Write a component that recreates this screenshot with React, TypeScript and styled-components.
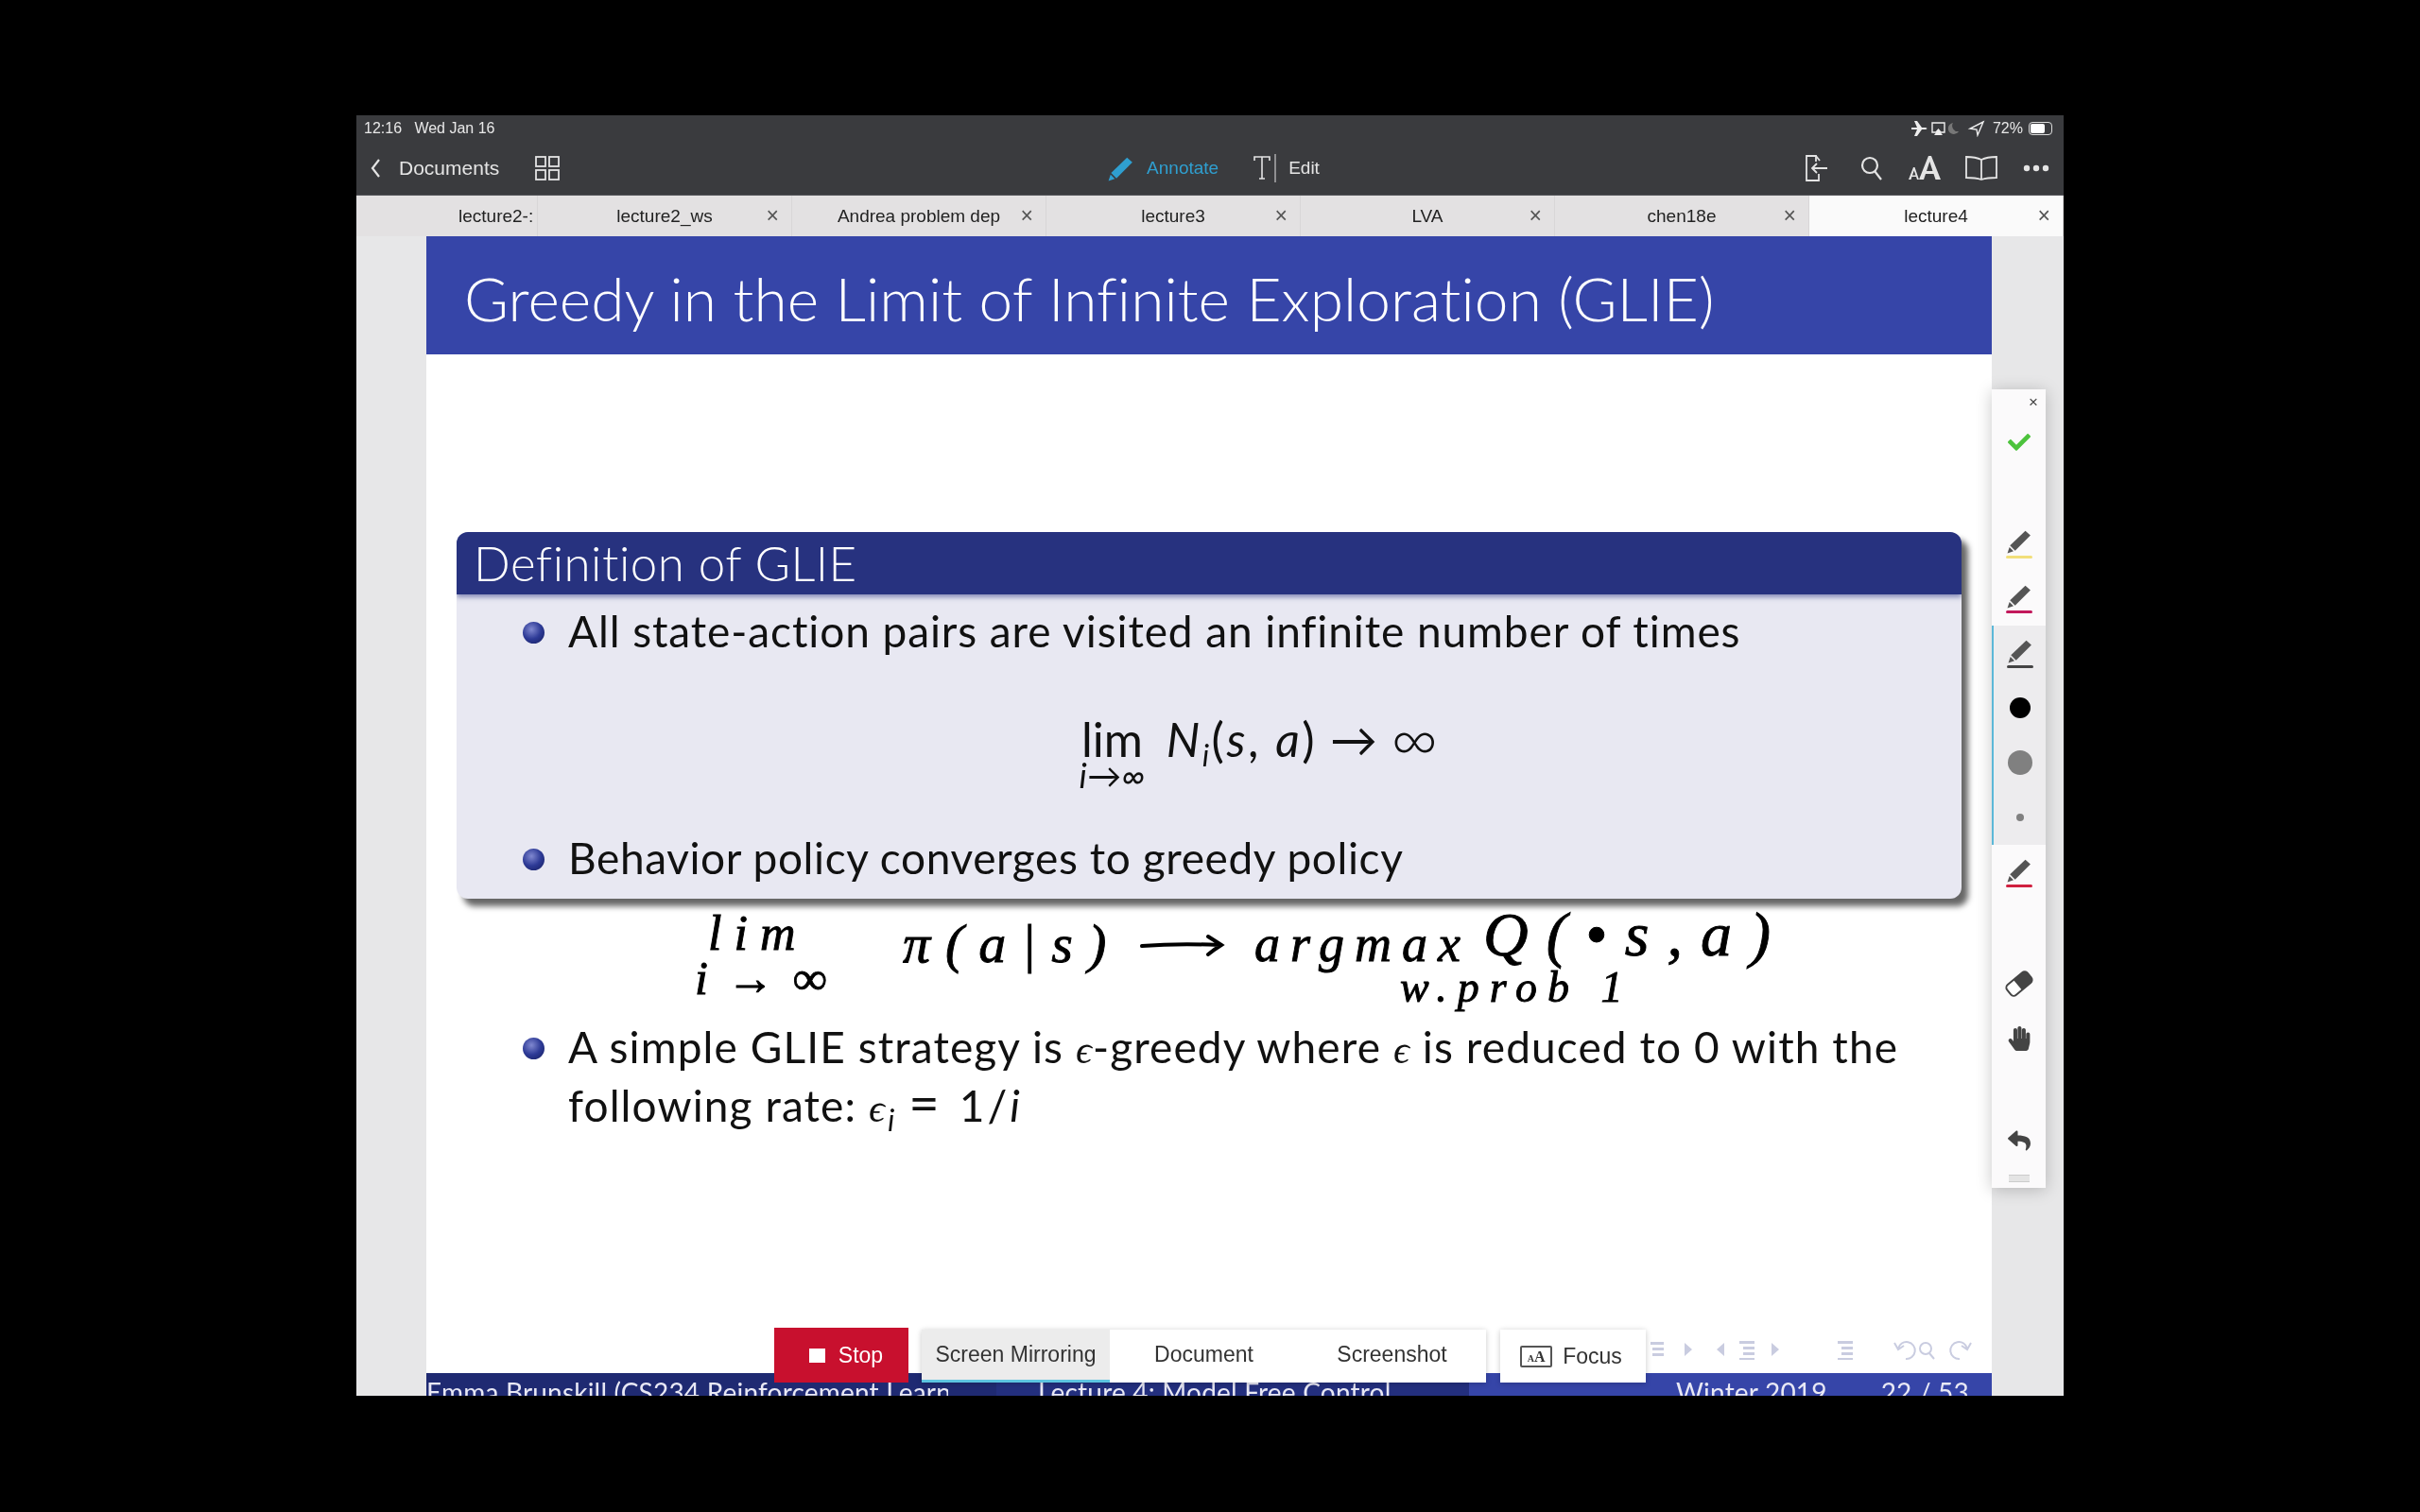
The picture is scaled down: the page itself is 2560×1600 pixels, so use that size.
import React from 'react';
import styled, { createGlobalStyle } from 'styled-components';
import { FaCheck, FaHandPaper, FaReply } from 'react-icons/fa';

const GlobalStyle = createGlobalStyle`
  html, body {
    margin: 0;
    padding: 0;
    background: #000;
  }
  #root {
    width: 2560px;
    height: 1600px;
    overflow: hidden;
  }
`;

const Page = styled.div`
  width: 2560px;
  height: 1600px;
  background: #000;
  padding: 122px 377px;
  box-sizing: border-box;
`;

const Screen = styled.div`
  position: relative;
  width: 1806px;
  height: 1355px;
  display: flex;
  flex-direction: column;
  overflow: hidden;
  background: #e7e7e8;
  filter: blur(0.5px);
  font-family: "Liberation Sans", Arial, sans-serif;
`;

const StatusBar = styled.div`
  height: 28px;
  padding: 0 10px 0 8px;
  background: #3a3b3e;
  color: #e8e8e8;
  font-size: 16px;
  display: flex;
  align-items: center;
  justify-content: space-between;
  flex-shrink: 0;
`;

const StatusRight = styled.div`
  display: flex;
  align-items: center;
  gap: 6px;
`;

const Battery = styled.div`
  width: 25px;
  height: 14px;
  border: 1px solid #ddd;
  border-radius: 4px;
  padding: 1px;
  box-sizing: border-box;
  display: flex;
  margin-right: 2px;
`;

const BatteryFill = styled.div`
  background: #fff;
  border-radius: 2px;
  height: 100%;
`;

const NavBar = styled.div`
  height: 57px;
  padding-left: 14px;
  background: #3a3b3e;
  border-bottom: 1px solid #55565a;
  box-sizing: border-box;
  display: grid;
  grid-template-columns: 1fr auto 1fr;
  align-items: center;
  color: #e4e4e4;
  flex-shrink: 0;
`;

const NavLeft = styled.div`
  display: flex;
  align-items: center;
`;

const BackLabel = styled.span`
  font-size: 21px;
  margin: 0 38px 0 19px;
`;

const NavCenter = styled.div`
  display: flex;
  align-items: center;
  margin-right: 6px;
  font-size: 19px;
`;

const AnnotateLabel = styled.span`
  color: #2f9fd0;
  margin: 0 36px 0 14px;
`;

const EditLabel = styled.span`
  margin-left: 12px;
`;

const NavRight = styled.div`
  display: grid;
  grid-auto-flow: column;
  grid-auto-columns: 58px;
  justify-content: end;
  justify-items: center;
  align-items: center;
`;

const TabBar = styled.div`
  height: 43px;
  background: #e3e1e2;
  display: flex;
  justify-content: flex-end;
  flex-shrink: 0;
  position: relative;
`;

const TabEdge = styled.div`
  position: absolute;
  left: 3px;
  top: 0;
  width: 16px;
  height: 100%;
  background: repeating-linear-gradient(90deg, #d4d2d3 0 1px, transparent 1px 5px);
`;

const Tab = styled.div<{ $active?: boolean; $cut?: boolean }>`
  width: 269px;
  flex-shrink: 0;
  position: relative;
  display: flex;
  align-items: center;
  justify-content: ${({ $cut }) => ($cut ? 'flex-start' : 'center')};
  padding-left: ${({ $cut }) => ($cut ? '185px' : '0')};
  box-sizing: border-box;
  background: ${({ $active }) => ($active ? '#fafafa' : '#e3e1e2')};
  border-right: 1px solid #d8d6d7;
  color: #222;
  font-size: 19px;
  white-space: nowrap;
  overflow: hidden;
`;

const TabClose = styled.span`
  position: absolute;
  right: 13px;
  top: 10px;
  color: #555;
  font-size: 23px;
  line-height: 23px;
  font-weight: 300;
`;

const Viewer = styled.div`
  flex: 1;
  min-height: 0;
  display: flex;
  justify-content: center;
`;

const Slide = styled.div`
  width: 1656px;
  margin-left: -2px;
  background: #fff;
  display: flex;
  flex-direction: column;
  font-family: Lato, "Open Sans", sans-serif;
  color: #111;
  position: relative;
`;

const TitleBar = styled.div`
  height: 125px;
  padding: 5px 0 0 40px;
  box-sizing: border-box;
  background: #3645a8;
  color: #fff;
  font-size: 64px;
  font-weight: 300;
  letter-spacing: 0.05px;
  display: flex;
  align-items: center;
  flex-shrink: 0;
`;

const SlideBody = styled.div`
  flex: 1;
  min-height: 0;
  padding: 188px 32px 0;
`;

const Block = styled.div`
  border-radius: 12px;
  background: #e8e8f2;
  box-shadow: 7px 8px 6px rgba(0, 0, 0, 0.6);
  overflow: hidden;
`;

const BlockHeader = styled.div`
  height: 66px;
  padding: 0 0 2px 18px;
  box-sizing: border-box;
  background: #27327f;
  color: #fff;
  font-size: 51px;
  font-weight: 300;
  letter-spacing: 0.5px;
  display: flex;
  align-items: center;
  box-shadow: 0 3px 5px rgba(39, 50, 127, 0.5);
`;

const BlockContent = styled.div`
  height: 322px;
  padding: 8px 0 0 70px;
  box-sizing: border-box;
`;

const BulletRow = styled.div<{ $spacing: number }>`
  display: flex;
  align-items: flex-start;
  font-size: 46px;
  line-height: 62px;
  letter-spacing: ${({ $spacing }) => $spacing}px;
`;

const Bullet = styled.span`
  width: 23px;
  height: 23px;
  margin: 21px 25px 0 0;
  border-radius: 50%;
  flex-shrink: 0;
  background: radial-gradient(circle at 40% 35%, #8088d0 0%, #2d3a96 50%, #141c5c 100%);
`;

const MathRow = styled.div`
  height: 178px;
  margin-left: 35px;
  display: flex;
  justify-content: center;
  align-items: flex-start;
  padding-top: 52px;
  box-sizing: border-box;
  font-size: 50px;
  line-height: 62px;
  gap: 14px;
`;

const LimStack = styled.div`
  display: flex;
  flex-direction: column;
  align-items: center;
  margin-right: 8px;
`;

const LimWord = styled.span`
  margin-top: 9px;
  line-height: 44px;
`;

const LimSub = styled.i`
  font-size: 36px;
  line-height: 32px;
  letter-spacing: 0.5px;
`;

const MathGroup = styled.span`
  letter-spacing: 2.5px;
`;

const MathItalic = styled.i`
  font-style: italic;
`;

const Sub = styled.i`
  font-size: 32px;
  position: relative;
  top: 10px;
  line-height: 0;
`;

const InfinityMark = styled.span`
  font-size: 68px;
  font-weight: 300;
  line-height: 58px;
`;

const Epsilon = styled.i`
  font-family: "Liberation Serif", serif;
  font-style: italic;
  font-size: 42px;
  line-height: 0;
`;

const RateFormula = styled.span`
  margin-left: 13px;
  letter-spacing: 3px;
`;

const EqualSign = styled.span`
  font-size: 56px;
  line-height: 0;
  margin: 0 18px 0 12px;
`;

const Following = styled.div`
  margin: 126px 0 0 70px;
`;

const Ink = styled.span<{ $x: number; $y: number; $size: number; $spacing?: number }>`
  position: absolute;
  left: ${({ $x }) => $x}px;
  top: ${({ $y }) => $y}px;
  font-family: "Liberation Serif", serif;
  font-style: italic;
  font-size: ${({ $size }) => $size}px;
  letter-spacing: ${({ $spacing }) => $spacing ?? 0}px;
  line-height: 1;
  color: #000;
  white-space: pre;
  -webkit-text-stroke: 0.9px #000;
`;

const InkArrow = styled.svg`
  position: absolute;
  left: 755px;
  top: 737px;
`;

const Footer = styled.div`
  height: 24px;
  display: grid;
  grid-template-columns: 603px 500px 1fr;
  font-size: 28px;
  letter-spacing: 0.2px;
  color: #e8e8f5;
  overflow: hidden;
  flex-shrink: 0;
`;

const FooterCell = styled.div<{ $bg: string }>`
  background: ${({ $bg }) => $bg};
  white-space: nowrap;
  line-height: 40px;
  overflow: hidden;
  display: flex;
  justify-content: space-between;
`;

const AuthorText = styled.span`
  display: block;
  width: 552px;
  overflow: hidden;
`;

const FooterTitle = styled.span`
  padding-left: 44px;
`;

const FooterDate = styled.span`
  padding-left: 219px;
`;

const PageNum = styled.span`
  padding-right: 24px;
`;

const BeamerNav = styled.svg`
  position: absolute;
  right: 16px;
  bottom: 36px;
`;

const Palette = styled.div`
  position: absolute;
  left: 1730px;
  top: 290px;
  width: 57px;
  height: 845px;
  background: #fbfafb;
  box-shadow: 0 2px 16px rgba(0, 0, 0, 0.22);
  display: flex;
  flex-direction: column;
  align-items: center;
`;

const PaletteClose = styled.span`
  align-self: flex-end;
  margin: 4px 8px 0 0;
  font-size: 17px;
  line-height: 20px;
  height: 20px;
  color: #444;
`;

const CheckSlot = styled.div`
  color: #4cc33c;
  font-size: 24px;
  height: 24px;
  margin-top: 20px;
  line-height: 24px;
`;

const Slot = styled.div<{ $h: number; $top?: number }>`
  height: ${({ $h }) => $h}px;
  margin-top: ${({ $top }) => $top ?? 0}px;
  flex-shrink: 0;
  display: flex;
  flex-direction: column;
  align-items: center;
  justify-content: center;
`;

const PenLine = styled.div<{ $color: string }>`
  width: 28px;
  height: 3px;
  border-radius: 2px;
  background: ${({ $color }) => $color};
  margin-top: 2px;
`;

const ActiveGroup = styled.div`
  align-self: stretch;
  height: 232px;
  flex-shrink: 0;
  background: #edecee;
  border-left: 2px solid #5cb8d8;
  display: flex;
  flex-direction: column;
  align-items: center;
`;

const Dot = styled.div<{ $size: number; $color: string }>`
  width: ${({ $size }) => $size}px;
  height: ${({ $size }) => $size}px;
  border-radius: 50%;
  background: ${({ $color }) => $color};
`;

const Grip = styled.div`
  width: 22px;
  height: 6px;
  margin-top: 14px;
  border-top: 1px solid #ccc;
  border-bottom: 1px solid #ccc;
  background: #e4e4e4;
`;

const Dock = styled.div`
  position: absolute;
  left: 442px;
  top: 1283px;
  display: flex;
  align-items: flex-end;
  font-size: 23px;
  color: #333;
`;

const StopButton = styled.div`
  width: 142px;
  height: 58px;
  background: #c8102e;
  color: #fff;
  display: flex;
  align-items: center;
  justify-content: center;
  gap: 14px;
  padding-left: 10px;
  box-sizing: border-box;
`;

const StopSquare = styled.span`
  width: 17px;
  height: 15px;
  background: #fff;
`;

const Segments = styled.div`
  margin-left: 14px;
  display: flex;
  background: #fff;
  box-shadow: 0 1px 6px rgba(0, 0, 0, 0.22);
`;

const Segment = styled.div<{ $selected?: boolean }>`
  width: 199px;
  height: 56px;
  box-sizing: border-box;
  display: flex;
  align-items: center;
  justify-content: center;
  background: ${({ $selected }) => ($selected ? '#ececec' : '#fff')};
  border-bottom: 3px solid ${({ $selected }) => ($selected ? '#5cc4e0' : '#fff')};
`;

const FocusButton = styled.div`
  margin-left: 15px;
  width: 154px;
  height: 56px;
  padding-right: 4px;
  box-sizing: border-box;
  background: #fff;
  box-shadow: 0 1px 6px rgba(0, 0, 0, 0.22);
  display: flex;
  align-items: center;
  justify-content: center;
  gap: 11px;
`;

const FocusIcon = styled.span`
  width: 34px;
  height: 23px;
  box-sizing: border-box;
  border: 2px solid #555;
  border-radius: 2px;
  font-family: "Liberation Serif", serif;
  font-size: 16px;
  font-weight: 700;
  line-height: 19px;
  text-align: center;
`;

const SmallA = styled.span`
  font-size: 10px;
`;

const Pen: React.FC<{ color?: string; size?: number }> = ({ color = '#555', size = 26 }) => (
  <svg width={size} height={size} viewBox="0 0 24 24" fill={color}>
    <path d="M18 1.5 L23 6 L8 21 L3 16 Z" />
    <path d="M2.5 17.5 L6.5 21.5 L0.5 23.5 Z" />
  </svg>
);

const EraserIcon = () => (
  <svg width="30" height="30" viewBox="0 0 30 30">
    <g transform="rotate(-40 15 15)">
      <rect x="1" y="8" width="28" height="14" rx="4" fill="#fff" stroke="#444" strokeWidth="2" />
      <path d="M13 8 H25 Q29 8 29 12 V18 Q29 22 25 22 H13 Z" fill="#444" />
    </g>
  </svg>
);

const DocIcon = () => (
  <svg width="26" height="30" viewBox="0 0 26 30" fill="none" stroke="#e4e4e4" strokeWidth="1.8">
    <path d="M12 8 V2 H2 V28 H15 V21" />
    <path d="M12 2 L16 7" />
    <path d="M24 15 H8 M13 10 L8 15 L13 20" />
  </svg>
);

const SearchIcon = () => (
  <svg width="26" height="28" viewBox="0 0 26 28" fill="none" stroke="#e4e4e4" strokeWidth="2.2">
    <circle cx="11" cy="11" r="8" />
    <path d="M16 17 L23 26" />
  </svg>
);

const BookIcon = () => (
  <svg width="36" height="28" viewBox="0 0 36 28" fill="none" stroke="#e4e4e4" strokeWidth="1.8">
    <path d="M18 5 Q12 2 2 2 V24 Q12 24 18 26 Q24 24 34 24 V2 Q24 2 18 5 Z M18 5 V26" />
  </svg>
);

const GridIcon = () => (
  <svg width="26" height="26" viewBox="0 0 26 26" fill="none" stroke="#e4e4e4" strokeWidth="1.8">
    <rect x="1" y="1" width="10" height="10" />
    <rect x="15" y="1" width="10" height="10" />
    <rect x="1" y="15" width="10" height="10" />
    <rect x="15" y="15" width="10" height="10" />
  </svg>
);

const ChevronIcon = () => (
  <svg width="12" height="22" viewBox="0 0 12 22" fill="none" stroke="#e4e4e4" strokeWidth="2.2">
    <path d="M10 2 L3 11 L10 20" />
  </svg>
);

const CursorTIcon = () => (
  <svg width="26" height="30" viewBox="0 0 26 30" fill="none" stroke="#e4e4e4" strokeWidth="1.6">
    <path d="M2 7 V3 H18 V7 M10 3 V26 M7 26 H13" />
    <path d="M24 0 V30" strokeWidth="1" />
  </svg>
);

const AaIcon = () => (
  <svg width="40" height="30" viewBox="0 0 40 30" fill="#e4e4e4">
    <path d="M1 27 L6 14 H7.5 L12 27 H10 L9 24 H4.5 L3.5 27 Z M5 22.5 H8.5 L6.8 17.5 Z" />
    <path d="M12 27 L22 2 H25 L35 27 H29.5 L27.5 21 H19 L17 27 Z M20 18 H26.5 L23.3 8 Z" />
  </svg>
);

const DotsIcon = () => (
  <svg width="28" height="8" viewBox="0 0 28 8" fill="#e4e4e4">
    <circle cx="4" cy="4" r="3.2" />
    <circle cx="14" cy="4" r="3.2" />
    <circle cx="24" cy="4" r="3.2" />
  </svg>
);

const StatusIcons = () => (
  <svg width="80" height="18" viewBox="0 0 80 18" fill="#eee">
    <path d="M0 8 H6 L3 1 H6 L11 8 H15 Q18 9 15 10 H11 L6 17 H3 L6 10 H0 Z" />
    <path d="M22 3 H35 V13 H31 L28.5 10 L26 13 H22 Z" fill="none" stroke="#eee" strokeWidth="1.4" />
    <path d="M28.5 10 L33 16 H24 Z" />
    <path d="M44 3 A6 6 0 1 0 50 12 A6 6 0 0 1 44 3 Z" fill="#777" />
    <path d="M76 2 L62 9 L69 10 L70 16 Z" fill="none" stroke="#eee" strokeWidth="1.4" />
  </svg>
);

const tabs = ['lecture2_ws', 'Andrea problem dep', 'lecture3', 'LVA', 'chen18e'];

const App: React.FC = () => (
  <>
    <GlobalStyle />
    <Page>
      <Screen>
        <StatusBar>
          <span>12:16&nbsp;&nbsp; Wed Jan 16</span>
          <StatusRight>
            <StatusIcons />
            <span>72%</span>
            <Battery>
              <BatteryFill style={{ width: '72%' }} />
            </Battery>
          </StatusRight>
        </StatusBar>
        <NavBar>
          <NavLeft>
            <ChevronIcon />
            <BackLabel>Documents</BackLabel>
            <GridIcon />
          </NavLeft>
          <NavCenter>
            <Pen color="#2f9fd0" size={27} />
            <AnnotateLabel>Annotate</AnnotateLabel>
            <CursorTIcon />
            <EditLabel>Edit</EditLabel>
          </NavCenter>
          <NavRight>
            <DocIcon />
            <SearchIcon />
            <AaIcon />
            <BookIcon />
            <DotsIcon />
          </NavRight>
        </NavBar>
        <TabBar>
          <TabEdge />
          <Tab $cut>lecture2-:</Tab>
          {tabs.map((t) => (
            <Tab key={t}>
              {t}
              <TabClose>×</TabClose>
            </Tab>
          ))}
          <Tab $active>
            lecture4
            <TabClose>×</TabClose>
          </Tab>
        </TabBar>
        <Viewer>
          <Slide>
            <TitleBar>Greedy in the Limit of Infinite Exploration (GLIE)</TitleBar>
            <SlideBody>
              <Block>
                <BlockHeader>Definition of GLIE</BlockHeader>
                <BlockContent>
                  <BulletRow $spacing={0.9}>
                    <Bullet />
                    All state-action pairs are visited an infinite number of times
                  </BulletRow>
                  <MathRow>
                    <LimStack>
                      <LimWord>lim</LimWord>
                      <LimSub>i→∞</LimSub>
                    </LimStack>
                    <MathGroup>
                      <MathItalic>N</MathItalic>
                      <Sub>i</Sub>(<MathItalic>s</MathItalic>, <MathItalic>a</MathItalic>)
                    </MathGroup>
                    <span>→</span>
                    <InfinityMark>∞</InfinityMark>
                  </MathRow>
                  <BulletRow $spacing={0.6}>
                    <Bullet />
                    Behavior policy converges to greedy policy
                  </BulletRow>
                </BlockContent>
              </Block>
              <Following>
                <BulletRow $spacing={1.1}>
                  <Bullet />
                  <div>
                    A simple GLIE strategy is <Epsilon>ϵ</Epsilon>-greedy where <Epsilon>ϵ</Epsilon> is reduced to 0 with the
                    <br />
                    following rate:
                    <RateFormula>
                      <Epsilon>ϵ</Epsilon>
                      <Sub>i</Sub>
                      <EqualSign>=</EqualSign>1/<MathItalic>i</MathItalic>
                    </RateFormula>
                  </div>
                </BulletRow>
              </Following>
            </SlideBody>
            <Footer>
              <FooterCell $bg="#1f2a72">
                <AuthorText>Emma Brunskill (CS234 Reinforcement Learn</AuthorText>
              </FooterCell>
              <FooterCell $bg="#232f7e">
                <FooterTitle>Lecture 4: Model Free Control</FooterTitle>
              </FooterCell>
              <FooterCell $bg="#3645a8">
                <FooterDate>Winter 2019</FooterDate>
                <PageNum>22 / 53</PageNum>
              </FooterCell>
            </Footer>
            <BeamerNav width="345" height="24" viewBox="0 0 345 24" fill="#c9cce0">
              <path d="M0 3 H14 V6 H0 Z M2 9 H14 V12 H2 Z M2 15 H14 V18 H2 Z" />
              <path d="M36 4 L44 11 L36 18 Z M78 4 L70 11 L78 18 Z" />
              <path d="M94 2 H110 V5 H94 Z M98 8 H110 V11 H98 Z M98 14 H110 V17 H98 Z M94 20 H110 V22 H94 Z" />
              <path d="M128 4 L136 11 L128 18 Z" />
              <path d="M198 2 H214 V5 H198 Z M202 8 H214 V11 H202 Z M202 14 H214 V17 H202 Z M198 20 H214 V22 H198 Z" />
              <g fill="none" stroke="#c9cce0" strokeWidth="2">
                <path d="M262 10 A9 9 0 1 1 270 21 M258 4 L262 11 L268 7" />
                <circle cx="291" cy="10" r="6" />
                <path d="M295 15 L300 21" />
                <path d="M335 10 A9 9 0 1 0 327 21 M339 4 L335 11 L329 7" />
              </g>
            </BeamerNav>
            <Ink $x={298} $y={712} $size={52} $spacing={13}>lim</Ink>
            <Ink $x={284} $y={760} $size={50} $spacing={20}>i→∞</Ink>
            <Ink $x={504} $y={720} $size={58} $spacing={16}>π(a|s)</Ink>
            <InkArrow width="90" height="26" viewBox="0 0 90 26" fill="none" stroke="#000" strokeWidth="4" strokeLinecap="round">
              <path d="M2 14 Q40 11 84 13 M72 4 Q80 9 86 13 Q78 18 72 23" />
            </InkArrow>
            <Ink $x={876} $y={722} $size={54} $spacing={11}>argmax</Ink>
            <Ink $x={1118} $y={706} $size={66} $spacing={19}>Q(•s,a)</Ink>
            <Ink $x={1030} $y={772} $size={46} $spacing={11}>w.prob 1</Ink>
          </Slide>
        </Viewer>
        <Palette>
          <PaletteClose>×</PaletteClose>
          <CheckSlot>
            <FaCheck />
          </CheckSlot>
          <Slot $h={58} $top={66}>
            <Pen />
            <PenLine $color="#f2df7a" />
          </Slot>
          <Slot $h={58}>
            <Pen />
            <PenLine $color="#c2185b" />
          </Slot>
          <ActiveGroup>
            <Slot $h={58}>
              <Pen />
              <PenLine $color="#444" />
            </Slot>
            <Slot $h={58}>
              <Dot $size={22} $color="#000" />
            </Slot>
            <Slot $h={58}>
              <Dot $size={26} $color="#808080" />
            </Slot>
            <Slot $h={58}>
              <Dot $size={8} $color="#808080" />
            </Slot>
          </ActiveGroup>
          <Slot $h={58}>
            <Pen />
            <PenLine $color="#d0203f" />
          </Slot>
          <Slot $h={44} $top={67}>
            <EraserIcon />
          </Slot>
          <Slot $h={44} $top={14}>
            <FaHandPaper size={26} color="#444" />
          </Slot>
          <Slot $h={44} $top={64}>
            <FaReply size={24} color="#444" />
          </Slot>
          <Grip />
        </Palette>
        <Dock>
          <StopButton>
            <StopSquare />
            Stop
          </StopButton>
          <Segments>
            <Segment $selected>Screen Mirroring</Segment>
            <Segment>Document</Segment>
            <Segment>Screenshot</Segment>
          </Segments>
          <FocusButton>
            <FocusIcon>
              <SmallA>A</SmallA>A
            </FocusIcon>
            Focus
          </FocusButton>
        </Dock>
      </Screen>
    </Page>
  </>
);

export default App;
